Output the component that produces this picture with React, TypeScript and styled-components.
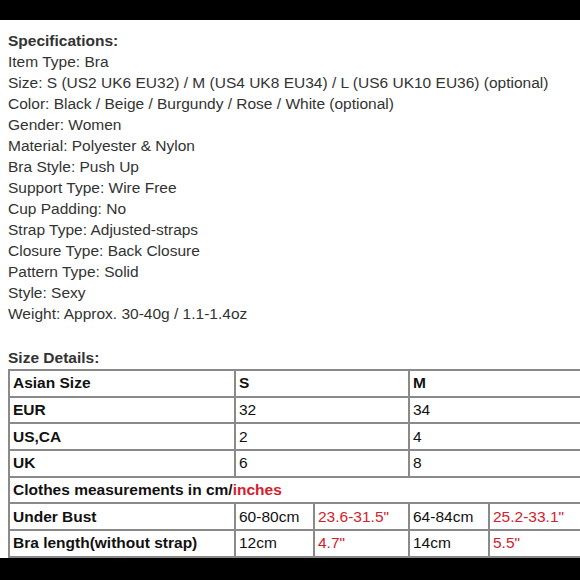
import React from "react";
import styled, { createGlobalStyle } from "styled-components";

const Global = createGlobalStyle`
  html, body { margin: 0; padding: 0; background: #fff; }
  body { width: 580px; height: 580px; overflow: hidden; font-family: "Liberation Sans", Arial, sans-serif; }
`;

const Page = styled.div`
  width: 580px;
  height: 580px;
  display: flex;
  flex-direction: column;
  overflow: hidden;
  background: #fff;
`;

const Bar = styled.div<{ $h: number }>`
  height: ${(p) => p.$h}px;
  flex: 0 0 auto;
  background: #000;
`;

const Content = styled.div`
  flex: 1 1 auto;
  overflow: hidden;
  padding: 10px 0 0 8px;
  color: #333;
  font-size: 15.5px;
  line-height: 21px;
`;

const Heading = styled.div<{ $mt?: number }>`
  font-weight: bold;
  margin-top: ${(p) => p.$mt ?? 0}px;
`;

const Line = styled.div`
  white-space: nowrap;
`;

const Table = styled.table`
  margin-top: 1px;
  border-collapse: collapse;
  table-layout: fixed;
  width: 600px;
  color: #111;
  font-size: 15.5px;
`;

const Cell = styled.td<{ $bold?: boolean; $red?: boolean }>`
  border: 2px solid #8a8a8a;
  height: 22.7px;
  padding: 1px 3px 1px 3px;
  line-height: 20px;
  white-space: nowrap;
  overflow: hidden;
  font-weight: ${(p) => (p.$bold ? "bold" : "normal")};
  color: ${(p) => (p.$red ? "#d4202c" : "inherit")};
`;

const Red = styled.span`
  color: #d4202c;
`;

const specs = [
  "Item Type: Bra",
  "Size: S (US2 UK6 EU32) / M (US4 UK8 EU34) / L (US6 UK10 EU36) (optional)",
  "Color: Black / Beige / Burgundy / Rose / White (optional)",
  "Gender: Women",
  "Material: Polyester & Nylon",
  "Bra Style: Push Up",
  "Support Type: Wire Free",
  "Cup Padding: No",
  "Strap Type: Adjusted-straps",
  "Closure Type: Back Closure",
  "Pattern Type: Solid",
  "Style: Sexy",
  "Weight: Approx. 30-40g / 1.1-1.4oz",
];

const sizeRows: [string, string, string][] = [
  ["EUR", "32", "34"],
  ["US,CA", "2", "4"],
  ["UK", "6", "8"],
];

export default function App() {
  return (
    <Page>
      <Global />
      <Bar $h={20} />
      <Content>
        <Heading>Specifications:</Heading>
        {specs.map((s) => (
          <Line key={s}>{s}</Line>
        ))}
        <Heading $mt={23}>Size Details:</Heading>
        <Table>
          <colgroup>
            <col style={{ width: 226 }} />
            <col style={{ width: 79 }} />
            <col style={{ width: 95 }} />
            <col style={{ width: 80 }} />
            <col style={{ width: 120 }} />
          </colgroup>
          <tbody>
            <tr>
              <Cell $bold>Asian Size</Cell>
              <Cell $bold colSpan={2}>S</Cell>
              <Cell $bold colSpan={2}>M</Cell>
            </tr>
            {sizeRows.map((r) => (
              <tr key={r[0]}>
                <Cell $bold>{r[0]}</Cell>
                <Cell colSpan={2}>{r[1]}</Cell>
                <Cell colSpan={2}>{r[2]}</Cell>
              </tr>
            ))}
            <tr>
              <Cell $bold colSpan={5}>
                Clothes measurements in cm/<Red>inches</Red>
              </Cell>
            </tr>
            <tr>
              <Cell $bold>Under Bust</Cell>
              <Cell>60-80cm</Cell>
              <Cell $red>23.6-31.5"</Cell>
              <Cell>64-84cm</Cell>
              <Cell $red>25.2-33.1"</Cell>
            </tr>
            <tr>
              <Cell $bold>Bra length(without strap)</Cell>
              <Cell>12cm</Cell>
              <Cell $red>4.7"</Cell>
              <Cell>14cm</Cell>
              <Cell $red>5.5"</Cell>
            </tr>
          </tbody>
        </Table>
      </Content>
      <Bar $h={22} />
    </Page>
  );
}
